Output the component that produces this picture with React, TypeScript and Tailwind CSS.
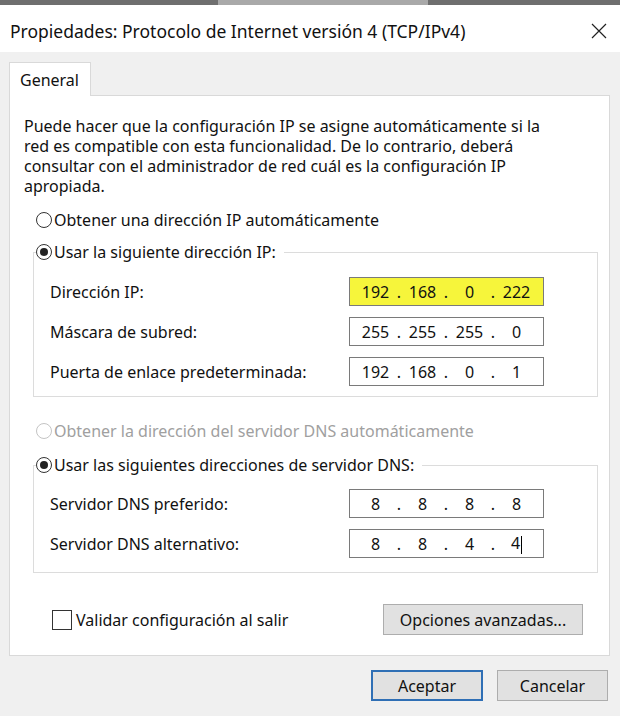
import { Fragment } from "react";

interface IpProps {
  parts: string[];
  highlight?: boolean;
  caret?: boolean;
}

const IpBox = ({ parts, highlight, caret }: IpProps) => (
  <div
    className={`flex h-[29px] w-[195px] items-center border border-[#7a7a7a] pl-[5px] ${
      highlight ? "bg-[#f6f53b]" : "bg-white"
    }`}
  >
    {parts.map((p, i) => (
      <Fragment key={i}>
        {i > 0 && <span className="w-[6px] text-center">.</span>}
        <span className="w-[41px] text-center">
          {p}
          {caret && i === 3 && (
            <span className="ml-[1px] inline-block h-[18px] w-[1px] bg-black align-middle" />
          )}
        </span>
      </Fragment>
    ))}
  </div>
);

const Radio = ({ checked, disabled }: { checked?: boolean; disabled?: boolean }) => (
  <span
    className={`flex h-[16px] w-[16px] shrink-0 items-center justify-center rounded-full border bg-white ${
      disabled ? "border-[#c4c4c4]" : "border-[#333333]"
    }`}
  >
    {checked && <span className="h-[8px] w-[8px] rounded-full bg-[#222222]" />}
  </span>
);

const Row = ({ label, children }: { label: string; children: React.ReactNode }) => (
  <div className="flex h-[29px] items-center">
    <span className="w-[299px]">{label}</span>
    {children}
  </div>
);

export default function App() {
  return (
    <div
      className="h-[716px] w-[620px] overflow-hidden bg-[#f0f0f0] text-[16px] leading-[20px] text-[#111111]"
      style={{ fontFamily: '"Noto Sans", "Open Sans", sans-serif' }}
    >
      {/* strip of the window behind */}
      <div className="flex h-[5px] bg-[#6f6f6f]">
        <div className="ml-[218px] w-[210px] bg-[#a9a9a9]" />
      </div>

      {/* title bar */}
      <div className="flex h-[47px] items-center justify-between bg-white pl-[10px] pr-[13px] pt-[4px]">
        <span className="text-[17.5px]">Propiedades: Protocolo de Internet versión 4 (TCP/IPv4)</span>
        <svg width="16" height="16" viewBox="0 0 16 16">
          <path d="M1 1 L15 15 M15 1 L1 15" stroke="#222" strokeWidth="1.2" fill="none" />
        </svg>
      </div>

      <div className="pl-[9px] pt-[10px]">
        {/* tab */}
        <div className="relative z-10 -mb-[1px] flex h-[34px] w-[82px] items-center border border-b-0 border-[#d9d9d9] bg-white pl-[10px]">
          General
        </div>

        {/* panel */}
        <div className="h-[561px] w-[601px] border border-[#d9d9d9] bg-white">
          <p className="pl-[14px] pt-[20px]">
            Puede hacer que la configuración IP se asigne automáticamente si la
            <br />
            red es compatible con esta funcionalidad. De lo contrario, deberá
            <br />
            consultar con el administrador de red cuál es la configuración IP
            <br />
            apropiada.
          </p>

          <div className="ml-[26px] mt-[14px] flex h-[20px] items-center gap-[2px]">
            <Radio />
            <span>Obtener una dirección IP automáticamente</span>
          </div>

          <fieldset className="ml-[23px] mt-[12px] w-[565px] border border-[#dcdcdc] pb-[10px] pl-[16px]">
            <legend className="-ml-[14px] flex h-[20px] items-center gap-[2px] pr-[8px]">
              <Radio checked />
              <span>Usar la siguiente dirección IP:</span>
            </legend>
            <div className="mt-[15px] flex flex-col gap-[11px]">
              <Row label="Dirección IP:">
                <IpBox parts={["192", "168", "0", "222"]} highlight />
              </Row>
              <Row label="Máscara de subred:">
                <IpBox parts={["255", "255", "255", "0"]} />
              </Row>
              <Row label="Puerta de enlace predeterminada:">
                <IpBox parts={["192", "168", "0", "1"]} />
              </Row>
            </div>
          </fieldset>

          <div className="ml-[26px] mt-[24px] flex h-[20px] items-center gap-[2px] text-[#a0a0a0]">
            <Radio disabled />
            <span>Obtener la dirección del servidor DNS automáticamente</span>
          </div>

          <fieldset className="ml-[23px] mt-[14px] w-[565px] border border-[#dcdcdc] pb-[14px] pl-[16px]">
            <legend className="-ml-[14px] flex h-[20px] items-center gap-[2px] pr-[8px]">
              <Radio checked />
              <span>Usar las siguientes direcciones de servidor DNS:</span>
            </legend>
            <div className="mt-[14px] flex flex-col gap-[11px]">
              <Row label="Servidor DNS preferido:">
                <IpBox parts={["8", "8", "8", "8"]} />
              </Row>
              <Row label="Servidor DNS alternativo:">
                <IpBox parts={["8", "8", "4", "4"]} caret />
              </Row>
            </div>
          </fieldset>

          <div className="mt-[31px] flex items-center justify-between pl-[42px] pr-[26px]">
            <div className="flex items-center gap-[4px]">
              <span className="h-[20px] w-[20px] border border-[#333333] bg-white" />
              <span>Validar configuración al salir</span>
            </div>
            <button className="h-[31px] w-[200px] border border-[#adadad] bg-[#e1e1e1]">
              Opciones avanzadas...
            </button>
          </div>
        </div>
      </div>

      {/* dialog buttons */}
      <div className="mt-[14px] flex justify-end gap-[14px] pr-[12px]">
        <button className="h-[31px] w-[112px] border-2 border-[#2f6fb5] bg-[#e1e1e1]">Aceptar</button>
        <button className="h-[31px] w-[111px] border border-[#adadad] bg-[#e1e1e1]">Cancelar</button>
      </div>
    </div>
  );
}
